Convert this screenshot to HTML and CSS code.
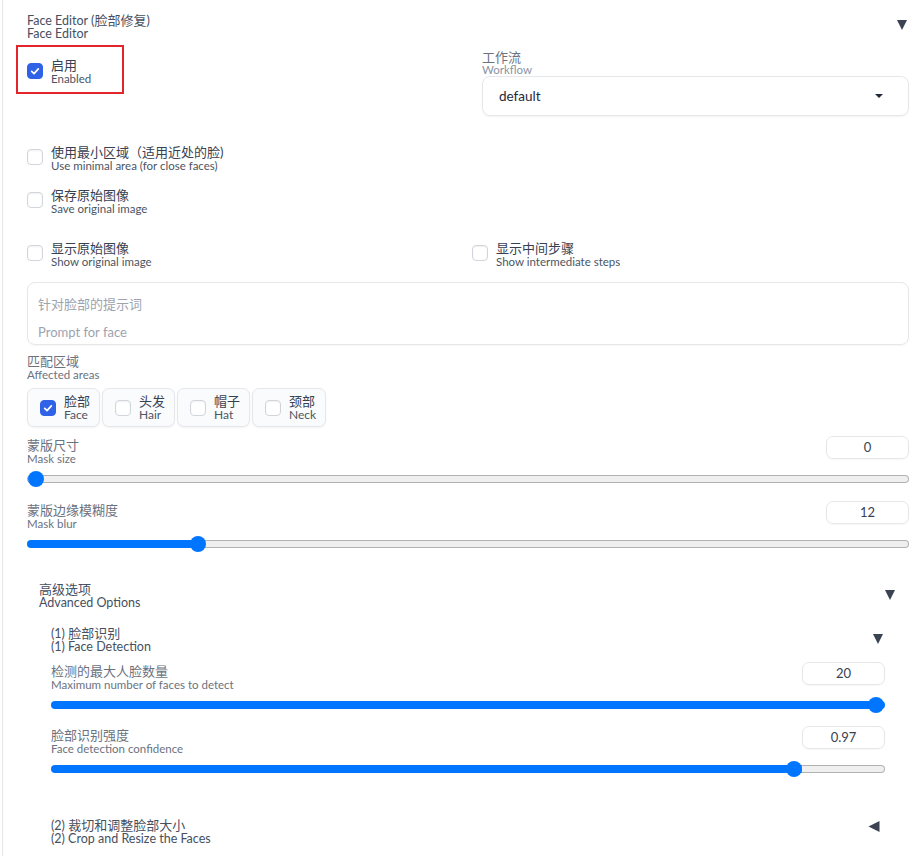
FILE: index.html
```html
<!DOCTYPE html>
<html lang="zh">
<head>
<meta charset="utf-8">
<title>Face Editor</title>
<link rel="stylesheet" href="styles.css">
</head>
<body>
<div class="page">
  <div class="acc-head">
    <div class="title"><div>Face Editor (<span class="zh">脸部修复</span>)</div><div>Face Editor</div></div>
    <svg class="tri tri-top" viewBox="0 0 10 10"><path d="M0 0H10L5 10Z"/></svg>
  </div>

  <div class="row-enable">
    <div class="col-left">
      <div class="highlight">
        <div class="check">
          <span class="cb on"><svg viewBox="0 0 16 16"><path d="M4.2 8.4L6.9 11L11.8 5.6"/></svg></span>
          <span class="lbl"><span class="zh">启用</span><span class="en">Enabled</span></span>
        </div>
      </div>
    </div>
    <div class="col-right">
      <div class="blabel wf"><span class="zh">工作流</span><span class="en">Workflow</span></div>
      <div class="dropdown"><span>default</span><svg class="caret" viewBox="0 0 8 4"><path d="M0 0H8L4 4Z"/></svg></div>
    </div>
  </div>

  <div class="check row-minimal">
    <span class="cb"></span>
    <span class="lbl"><span class="zh">使用最小区域（适用近处的脸)</span><span class="en">Use minimal area (for close faces)</span></span>
  </div>

  <div class="check row-save">
    <span class="cb"></span>
    <span class="lbl"><span class="zh">保存原始图像</span><span class="en">Save original image</span></span>
  </div>

  <div class="row-show">
    <div class="check">
      <span class="cb"></span>
      <span class="lbl"><span class="zh">显示原始图像</span><span class="en">Show original image</span></span>
    </div>
    <div class="check">
      <span class="cb"></span>
      <span class="lbl"><span class="zh">显示中间步骤</span><span class="en">Show intermediate steps</span></span>
    </div>
  </div>

  <div class="prompt">针对脸部的提示词<br><br>Prompt for face</div>

  <div class="blabel areas-label"><span class="zh">匹配区域</span><span class="en">Affected areas</span></div>
  <div class="chips">
    <div class="chip">
      <span class="cb on"><svg viewBox="0 0 16 16"><path d="M4.2 8.4L6.9 11L11.8 5.6"/></svg></span>
      <span class="lbl"><span class="zh">脸部</span><span class="en">Face</span></span>
    </div>
    <div class="chip">
      <span class="cb"></span>
      <span class="lbl"><span class="zh">头发</span><span class="en">Hair</span></span>
    </div>
    <div class="chip">
      <span class="cb"></span>
      <span class="lbl"><span class="zh">帽子</span><span class="en">Hat</span></span>
    </div>
    <div class="chip">
      <span class="cb"></span>
      <span class="lbl"><span class="zh">颈部</span><span class="en">Neck</span></span>
    </div>
  </div>

  <div class="slider-block mask-size">
    <div class="sb-head">
      <div class="blabel"><span class="zh">蒙版尺寸</span><span class="en">Mask size</span></div>
      <div class="num">0</div>
    </div>
    <input class="range" type="range" min="0" max="64" step="1" value="0" style="--p:0%">
  </div>

  <div class="slider-block mask-blur">
    <div class="sb-head">
      <div class="blabel"><span class="zh">蒙版边缘模糊度</span><span class="en">Mask blur</span></div>
      <div class="num">12</div>
    </div>
    <input class="range" type="range" min="0" max="64" step="1" value="12" style="--p:18.75%">
  </div>

  <div class="adv">
    <div class="acc-head">
      <div class="title"><div class="zh">高级选项</div><div>Advanced Options</div></div>
      <svg class="tri tri-sub" viewBox="0 0 10 10"><path d="M0 0H10L5 10Z"/></svg>
    </div>

    <div class="fd">
      <div class="acc-head">
        <div class="title"><div>(1) <span class="zh">脸部识别</span></div><div>(1) Face Detection</div></div>
        <svg class="tri tri-sub" viewBox="0 0 10 10"><path d="M0 0H10L5 10Z"/></svg>
      </div>

      <div class="slider-block max-faces">
        <div class="sb-head">
          <div class="blabel"><span class="zh">检测的最大人脸数量</span><span class="en">Maximum number of faces to detect</span></div>
          <div class="num">20</div>
        </div>
        <input class="range" type="range" min="1" max="20" step="1" value="20" style="--p:100%">
      </div>

      <div class="slider-block confidence">
        <div class="sb-head">
          <div class="blabel"><span class="zh">脸部识别强度</span><span class="en">Face detection confidence</span></div>
          <div class="num">0.97</div>
        </div>
        <input class="range" type="range" min="0.7" max="1" step="0.01" value="0.97" style="--p:90%">
      </div>
    </div>

    <div class="crop">
      <div class="acc-head">
        <div class="title"><div>(2) <span class="zh">裁切和调整脸部大小</span></div><div>(2) Crop and Resize the Faces</div></div>
        <svg class="tri tri-left" viewBox="0 0 12 12"><path d="M12 0V12L0 6Z"/></svg>
      </div>
    </div>
  </div>
</div>
</body>
</html>
```

FILE: styles.css
```css
* { box-sizing: border-box; }
html, body { margin: 0; padding: 0; background: #fff; }
body {
  font-family: "Lato", "Noto Sans CJK SC", sans-serif;
  font-size: 13px;
  line-height: 13px;
  color: #374151;
}
.page {
  margin-left: 2px;
  border-left: 1px solid #e5e7eb;
  padding: 14px 7px 20px 24px;
  min-height: 856px;
}

/* accordion heads */
.acc-head { display: flex; justify-content: space-between; align-items: flex-start; }
.title { color: #465061; font-size: 12.5px; line-height: 13px; }
.title .zh { font-size: 13px; }
.tri { width: 10px; height: 10px; fill: #3b4352; flex: none; }
.tri-top { margin-top: 6px; margin-right: 2px; }
.tri-sub { margin-top: 7px; margin-right: 2px; }
.tri-left { width: 12px; height: 11px; margin-top: 2px; margin-right: 5px; }

/* checkbox */
.check { display: flex; align-items: flex-start; gap: 8px; }
.cb {
  width: 16px; height: 16px; flex: none;
  border: 1px solid #d1d5db; border-radius: 4px;
  background: #fff;
  box-shadow: inset 0 1px 2px rgba(0,0,0,0.06);
  margin-top: 3px;
  display: flex; align-items: center; justify-content: center;
}
.cb.on { background: #2f62e6; border-color: #2f62e6; box-shadow: none; }
.cb svg { width: 16px; height: 16px; fill: none; stroke: #fff; stroke-width: 2; stroke-linecap: round; stroke-linejoin: round; }
.lbl { display: flex; flex-direction: column; }
.zh { font-size: 13px; line-height: 13px; }
.en { font-size: 11.5px; line-height: 13px; color: #4b5563; }

/* enable row */
.row-enable { display: flex; margin-top: 5px; }
.col-left { width: 455px; flex: none; }
.col-right { flex: 1; margin-top: 6px; }
.highlight {
  margin-left: -11px;
  width: 108px; height: 49px;
  border: 2px solid #e3242b;
  padding: 12px 0 7px 9px;
}
.highlight .cb { margin-top: 4px; }

.blabel { display: flex; flex-direction: column; color: #6b7280; }
.blabel .en { color: #6b7280; font-size: 11.5px; }
.wf .en { line-height: 12px; color: #8b93a3; }

.dropdown {
  height: 40px;
  border: 1px solid #e5e7eb; border-radius: 8px;
  box-shadow: 0 1px 2px rgba(0,0,0,0.05);
  display: flex; align-items: center; justify-content: space-between;
  padding: 0 25px 0 16px;
  font-size: 13.5px; color: #1f2937;
}
.caret { width: 8px; height: 4px; fill: #1f2937; }

.row-minimal { margin-top: 30px; }
.row-save { margin-top: 17px; }
.row-show { display: grid; grid-template-columns: 445px 1fr; margin-top: 27px; }

.prompt {
  margin-top: 14px;
  height: 63px;
  border: 1px solid #e5e7eb; border-radius: 8px;
  box-shadow: 0 1px 2px rgba(0,0,0,0.04);
  padding: 14px 10px;
  color: #9ca3af;
  font-size: 13px; line-height: 14px;
}

.areas-label { margin-top: 10px; }
.chips { display: flex; gap: 2px; margin-top: 7px; }
.chip {
  height: 39px;
  display: flex; align-items: center; gap: 8px;
  padding: 0 9px 0 12px;
  border: 1px solid #e5e7eb; border-radius: 7px;
  background: #fafbfc;
  box-shadow: 0 1px 2px rgba(0,0,0,0.05);
}
.chip .cb { margin-top: 0; }
.chip .en { font-size: 12px; }

/* sliders */
.slider-block { margin-top: 14px; }
.mask-size { margin-top: 9px; }
.sb-head { display: flex; justify-content: space-between; align-items: flex-start; }
.sb-head .blabel { margin-top: 3px; }
.num {
  width: 83px; height: 23px;
  border: 1px solid #e5e7eb; border-radius: 7px;
  box-shadow: 0 1px 2px rgba(0,0,0,0.04);
  text-align: center;
  font-size: 13px; line-height: 21px; color: #374151;
}
.range {
  -webkit-appearance: none;
  appearance: none;
  display: block; width: 100%; height: 16px; margin: 6px 0 0;
  background: transparent;
}
.range::-webkit-slider-runnable-track {
  height: 8px;
  border-radius: 4px;
  border: 1px solid transparent;
  background:
    linear-gradient(#0075ff, #0075ff) 0 0 / var(--p) 100% no-repeat border-box,
    linear-gradient(#efefef, #efefef) padding-box,
    #b2b2b2 border-box;
}
.range::-webkit-slider-thumb {
  -webkit-appearance: none;
  appearance: none;
  width: 16px; height: 16px;
  border-radius: 50%;
  background: #0075ff;
  border: none;
  margin-top: -5px;
}

.adv { margin-top: 31px; padding: 0 12px; }
.fd { margin-top: 18px; padding: 0 12px; }
.max-faces { margin-top: 9px; }
.confidence { margin-top: 13px; }
.crop { margin-top: 42px; padding: 0 12px; }
```
